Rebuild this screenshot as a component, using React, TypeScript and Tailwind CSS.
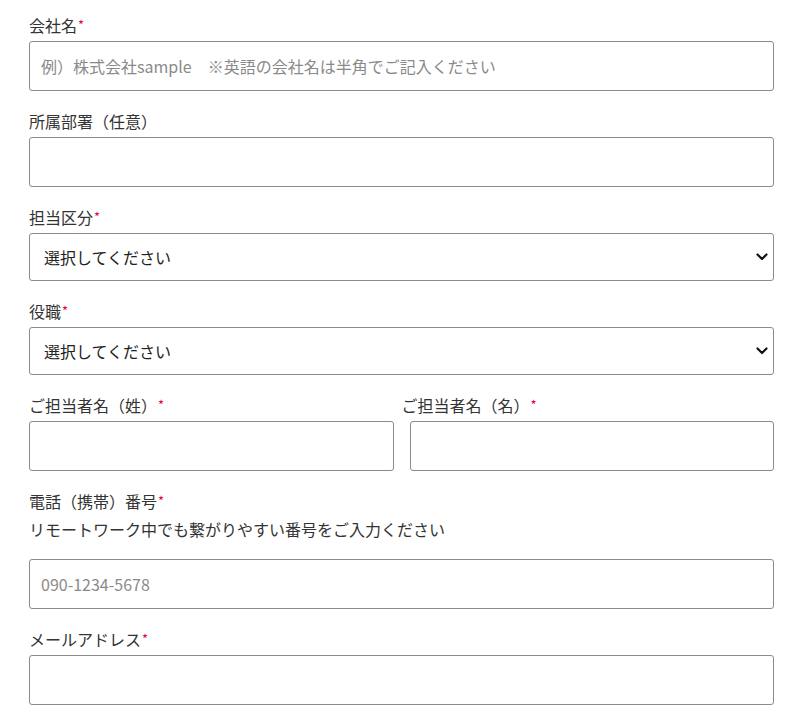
import type { JSX, ReactNode } from "react";

const font = { fontFamily: '"Noto Sans CJK JP", "Noto Sans", sans-serif' };

function Req(): JSX.Element {
  return <span className="relative top-[-2px] ml-px text-[13px] leading-none text-[#e60040]">*</span>;
}

function Label({ children, className = "" }: { children: ReactNode; className?: string }): JSX.Element {
  return <label className={`mb-1 block text-[16px] leading-6 text-[#333] ${className}`}>{children}</label>;
}

function TextInput({ placeholder }: { placeholder?: string }): JSX.Element {
  return (
    <input
      type="text"
      placeholder={placeholder}
      className="block h-[50px] w-full rounded-[3px] border border-[#8a8a8a] bg-white px-[11px] text-[16px] text-[#333] placeholder:text-[#8a8a8a] focus:outline-none"
      style={font}
    />
  );
}

function Select(): JSX.Element {
  return (
    <div className="relative">
      <div className="flex h-12 w-full items-center rounded-[3px] border border-[#8a8a8a] bg-white pl-[14px] text-[16px] text-[#222]">
        選択してください
      </div>
      <svg
        className="pointer-events-none absolute right-[6px] top-1/2 -translate-y-1/2"
        width="12"
        height="8"
        viewBox="0 0 12 8"
        fill="none"
      >
        <path d="M1.5 1.5 6 6l4.5-4.5" stroke="#111" strokeWidth="2.2" strokeLinecap="round" strokeLinejoin="round" />
      </svg>
    </div>
  );
}

export default function App(): JSX.Element {
  return (
    <div className="min-h-screen bg-white px-[29px] pt-[13px]" style={font}>
      <div className="w-[745px]">
        <div className="mb-[18px]">
          <Label>
            会社名<Req />
          </Label>
          <TextInput placeholder="例）株式会社sample　※英語の会社名は半角でご記入ください" />
        </div>

        <div className="mb-[18px]">
          <Label>所属部署（任意）</Label>
          <TextInput />
        </div>

        <div className="mb-[18px]">
          <Label>
            担当区分<Req />
          </Label>
          <Select />
        </div>

        <div className="mb-[18px]">
          <Label>
            役職<Req />
          </Label>
          <Select />
        </div>

        {/* name row: the second label sits a little left of its input, as in the original */}
        <div className="mb-[18px] grid grid-cols-2 gap-4">
          <div>
            <Label>
              ご担当者名（姓）<Req />
            </Label>
            <TextInput />
          </div>
          <div>
            <Label className="-ml-2">
              ご担当者名（名）<Req />
            </Label>
            <TextInput />
          </div>
        </div>

        <div className="mb-[18px]">
          <Label>
            電話（携帯）番号<Req />
          </Label>
          <p className="mb-[18px] text-[16px] leading-6 text-[#333]">リモートワーク中でも繋がりやすい番号をご入力ください</p>
          <TextInput placeholder="090-1234-5678" />
        </div>

        <div>
          <Label>
            メールアドレス<Req />
          </Label>
          <TextInput />
        </div>
      </div>
    </div>
  );
}
